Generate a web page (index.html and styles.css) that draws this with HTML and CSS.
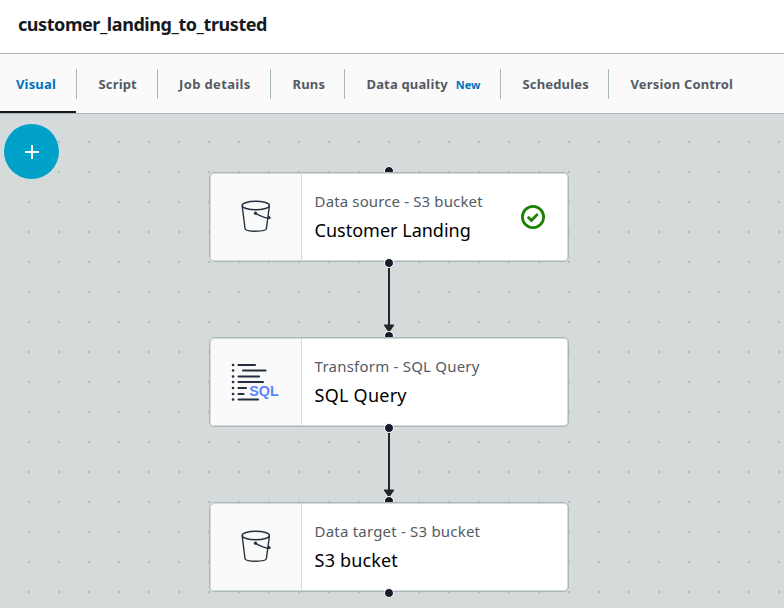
FILE: index.html
```html
<!DOCTYPE html>
<html lang="en">
<head>
<meta charset="utf-8">
<title>customer_landing_to_trusted</title>
<link rel="stylesheet" href="styles.css">
</head>
<body>
<svg class="defs" width="0" height="0" aria-hidden="true">
  <symbol id="bucket" viewBox="0 0 32 34">
    <g fill="none" stroke="#232f3e" stroke-width="1.4" stroke-linecap="round" stroke-linejoin="round">
      <ellipse cx="14.8" cy="5.5" rx="13.6" ry="4.2"/>
      <path d="M1.2 6 4 28.500c.3 3.600 21 3.600 21.400 0L28.400 6"/>
      <path d="M14.500 13.400C19 15.800 24 18 27.600 18.400c2 .2 1.900-1.200-.1-1.600"/>
    </g>
    <circle cx="14.500" cy="13.200" r="1.600" fill="#232f3e"/>
  </symbol>
  <symbol id="arrow" viewBox="0 0 14 74">
    <path d="M7 0v66" stroke="#232529" stroke-width="2"/>
    <path d="M2.200 62h9.600L7 69z" fill="#232529" stroke="#232529" stroke-linejoin="round"/>
  </symbol>
</svg>
<header class="title-bar"><h1>customer_landing_to_trusted</h1></header>
<nav class="tabs">
  <a class="tab visual active"><span>Visual</span></a>
  <a class="tab script"><span>Script</span></a>
  <a class="tab details"><span>Job details</span></a>
  <a class="tab runs"><span>Runs</span></a>
  <a class="tab quality"><span>Data quality</span><small>New</small></a>
  <a class="tab schedules"><span>Schedules</span></a>
  <a class="tab version"><span>Version Control</span></a>
</nav>
<main class="canvas">
  <button class="add" aria-label="Add node"><svg width="14" height="14" viewBox="0 0 14 14"><path d="M7 0v14M0 7h14" stroke="#fff" stroke-width="2"/></svg></button>

  <svg class="edge first-edge"><use href="#arrow"/></svg>
  <svg class="edge second-edge"><use href="#arrow"/></svg>

  <section class="node source">
    <i class="port in"></i>
    <div class="card">
      <div class="icon"><svg class="bucket"><use href="#bucket"/></svg></div>
      <div class="copy"><p class="kind k1">Data source - S3 bucket</p><p class="name n1">Customer Landing</p></div>
      <svg class="check" width="24" height="24" viewBox="0 0 24 24" fill="none" stroke="#1d8102" stroke-width="2.800"><circle cx="12" cy="12" r="10.600"/><path d="m6.800 11.800 3.600 3.600 6.300-6.400"/></svg>
    </div>
    <i class="port out"></i>
  </section>

  <section class="node transform">
    <i class="port in"></i>
    <div class="card">
      <div class="icon">
        <svg class="sql" width="50" height="40" viewBox="0 0 50 40">
          <path d="M2 3h.1M2 8.500h.1M2 14.500h.1M2 20h.1M2 26h.1M2 32h.1M2 37.500h.1" stroke="#232f3e" stroke-width="2.600" stroke-linecap="round"/>
          <path d="M7.500 3H24M12 8.500h22.500M7.500 14.500H28M7.500 20H32M7.500 26H15M7.500 32H12.500M7.500 37.500H27" stroke="#232f3e" stroke-width="2.200" stroke-linecap="round"/>
          <text x="18.300" y="33.500" textLength="29.500" lengthAdjust="spacingAndGlyphs">SQL</text>
        </svg>
      </div>
      <div class="copy"><p class="kind k2">Transform - SQL Query</p><p class="name n2">SQL Query</p></div>
    </div>
    <i class="port out"></i>
  </section>

  <section class="node target">
    <i class="port in"></i>
    <div class="card">
      <div class="icon"><svg class="bucket"><use href="#bucket"/></svg></div>
      <div class="copy"><p class="kind k3">Data target - S3 bucket</p><p class="name n3">S3 bucket</p></div>
    </div>
    <i class="port out"></i>
  </section>
</main>
</body>
</html>
```
FILE: styles.css
```css
* { box-sizing: border-box; }
body {
  margin: 0;
  height: 608px;
  overflow: hidden;
  display: flex;
  flex-direction: column;
  font-family: "Noto Sans", sans-serif;
  color: #16191f;
  background: #fff;
}
.defs { position: absolute; }
.title-bar { height: 53px; padding: 11px 18px 0; }
h1 { margin: 0; font-size: 18px; line-height: 26px; font-weight: 700; letter-spacing: -0.44px; }
.tabs {
  display: flex;
  height: 61px;
  flex: none;
  background: #fafafa;
  border-top: 1px solid #aab7b8;
  border-bottom: 1px solid #aab7b8;
}
.tab {
  position: relative;
  height: 59px;
  padding: 20px 0 0 21.500px;
  font-size: 13px;
  line-height: 20px;
  font-weight: 700;
  letter-spacing: 0.16px;
  color: #545b64;
  white-space: nowrap;
}
.tab:not(:last-child)::after {
  content: "";
  position: absolute;
  right: 0;
  top: 15px;
  width: 1px;
  height: 30px;
  background: #aab7b8;
}
.visual { width: 77px; padding-left: 16px; }
.script { width: 81px; }
.details { width: 113px; padding-left: 21px; letter-spacing: 0.36px; }
.runs { width: 74px; }
.quality { width: 156px; }
.schedules { width: 108px; }
.version { width: 175px; }
.tab small { margin-left: 8px; font-size: 11px; letter-spacing: 0; color: #0073bb; }
.active { color: #0073bb; }
.active::before {
  content: "";
  position: absolute;
  left: 0;
  bottom: 0;
  width: 76px;
  height: 2px;
  background: #16191f;
}
.canvas {
  position: relative;
  flex: 1;
  overflow: hidden;
  background: conic-gradient(from 0deg at 2px 2px, transparent 0 75%, #b2bcbd 0) 28px 27px / 30px 30px #d5dbdb;
}
.add {
  position: absolute;
  left: 4px;
  top: 10px;
  width: 55px;
  height: 55px;
  display: grid;
  place-items: center;
  padding: 0 0 0 1px;
  border: 0;
  border-radius: 50%;
  background: #00a1c9;
}
.node { position: absolute; left: 209px; width: 360px; height: 90px; }
.source { top: 58px; }
.transform { top: 223px; }
.target { top: 388px; }
.card {
  position: relative;
  display: flex;
  height: 90px;
  border: 1px solid #aab7b8;
  border-radius: 5px;
  background: #fff;
  box-shadow: inset 0 0 0 1px #d5dbdb;
  overflow: hidden;
}
.icon {
  width: 92px;
  flex: none;
  display: grid;
  place-items: center;
  background: #fafafa;
  border-right: 1px solid #d5dbdb;
  box-shadow: inset 1px 1px #d5dbdb, inset 0 -1px #d5dbdb;
  border-radius: 4px 0 0 4px;
}
.bucket { width: 32px; height: 34px; margin-left: 3px; }
.sql text { font: 700 14px "Liberation Sans", sans-serif; fill: #5686ff; }
.copy { padding: 17px 0 0 12.600px; }
.copy p { margin: 0; white-space: nowrap; }
.kind { font-size: 15px; line-height: 22px; color: #545b64; }
.k1 { letter-spacing: 0.13px; }
.k2 { letter-spacing: 0.22px; }
.k3 { letter-spacing: 0.2px; }
.name { padding-top: 4px; font-size: 18px; line-height: 28px; color: #000; }
.n2 { letter-spacing: 0.24px; }
.n3 { letter-spacing: 0.16px; }
.check { position: absolute; left: 311px; top: 32px; }
.port {
  position: absolute;
  left: 175px;
  width: 10px;
  height: 10px;
  border: 1px solid #fff;
  border-radius: 50%;
  background: #1a1a2c;
}
.in { top: -6px; }
.out { bottom: -6px; }
.edge { position: absolute; left: 382px; width: 14px; height: 74px; }
.first-edge { top: 149px; }
.second-edge { top: 314px; }
```
